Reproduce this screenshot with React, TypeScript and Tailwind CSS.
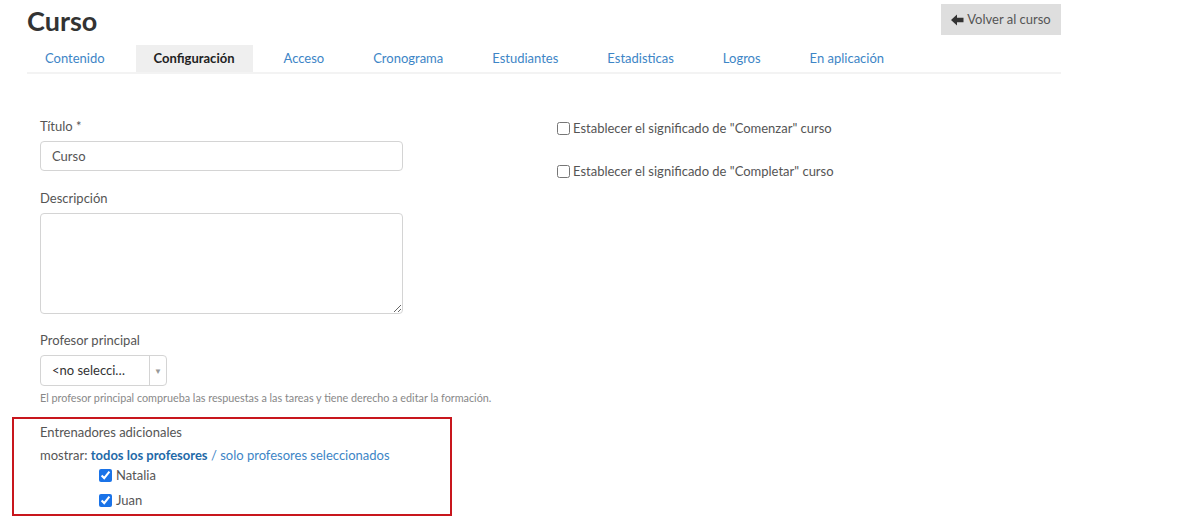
import React from 'react';

const tabs = ['Contenido', 'Configuración', 'Acceso', 'Cronograma', 'Estudiantes', 'Estadisticas', 'Logros', 'En aplicación'];

export default function App() {
    return (
        <div className="min-h-[523px] bg-white font-['Lato','Liberation_Sans',sans-serif] text-[13px] text-[#555]">
            <div className="ml-[27px] w-[1034px]">
                {/* Header */}
                <div className="flex items-start justify-between pt-[4px]">
                    <h1 className="mt-[1px] text-[27px] font-bold leading-[32px] text-[#333]">Curso</h1>
                    <button className="flex h-[31px] w-[120px] items-center justify-center gap-[3px] bg-[#dedede] text-[13px] text-[#555]">
                        <svg width="13" height="12" viewBox="0 0 13 12" className="mt-[1px]">
                            <path d="M0 6 L6 0.5 V3.8 H12.5 V8.2 H6 V11.5 Z" fill="#333" />
                        </svg>
                        Volver al curso
                    </button>
                </div>

                {/* Tabs */}
                <div className="mt-[8px] flex gap-[13px] border-b-2 border-[#f3f3f3]">
                    {tabs.map((tab) => (
                        <div
                            key={tab}
                            className={
                                tab === 'Configuración'
                                    ? 'flex h-[27px] items-center bg-[#efefef] px-[18px] font-bold text-[#222]'
                                    : 'flex h-[27px] items-center px-[18px] text-[#3d85c6]'
                            }
                        >
                            {tab}
                        </div>
                    ))}
                </div>

                {/* Form */}
                <div className="mt-[44px] grid grid-cols-2">
                    <div className="px-[13px]">
                        <label className="block leading-[16px]">Título *</label>
                        <input
                            defaultValue="Curso"
                            className="mt-[7px] h-[30px] w-[363px] rounded-[4px] border border-[#d4d4d4] px-[11px] text-[13px] text-[#555] outline-none"
                        />

                        <label className="mt-[19px] block leading-[16px]">Descripción</label>
                        <textarea className="mt-[7px] block h-[101px] w-[363px] rounded-[4px] border border-[#d4d4d4] outline-none" />

                        <label className="mt-[18px] block leading-[16px]">Profesor principal</label>
                        <div className="mt-[7px] flex h-[31px] w-[127px] items-center rounded-[4px] border border-[#d4d4d4]">
                            <span className="flex-1 pl-[11px] text-[13px] text-[#333]">&lt;no selecci…</span>
                            <span className="flex h-full w-[17px] items-center justify-center border-l border-[#d4d4d4] text-[8px] text-[#999]">▼</span>
                        </div>
                        <p className="mt-[5px] text-[10.8px] leading-[13px] text-[#888]">
                            El profesor principal comprueba las respuestas a las tareas y tiene derecho a editar la formación.
                        </p>

                        <div className="mt-[13px] ml-[-28px] w-[440px] border-2 border-[#c8161d] pl-[26px] pt-[5px] pb-[6px]">
                            <div className="leading-[16px]">Entrenadores adicionales</div>
                            <div className="mt-[7px] leading-[16px]">
                                mostrar: <span className="font-bold text-[#1f6aa8]">todos los profesores</span>{' '}
                                <span className="text-[#3d85c6]">/ solo profesores seleccionados</span>
                            </div>
                            <label className="ml-[59px] mt-[4px] flex items-center gap-[4px] leading-[16px]">
                                <input type="checkbox" defaultChecked className="m-0 h-[13px] w-[13px] accent-[#1a73e8]" />
                                Natalia
                            </label>
                            <label className="ml-[59px] mt-[9px] flex items-center gap-[4px] leading-[16px]">
                                <input type="checkbox" defaultChecked className="m-0 h-[13px] w-[13px] accent-[#1a73e8]" />
                                Juan
                            </label>
                        </div>
                    </div>

                    <div className="px-[13px] pt-[2px]">
                        <label className="flex items-center gap-[3px] leading-[16px]">
                            <input type="checkbox" className="m-0 h-[13px] w-[13px]" />
                            Establecer el significado de "Comenzar" curso
                        </label>
                        <label className="mt-[27px] flex items-center gap-[3px] leading-[16px]">
                            <input type="checkbox" className="m-0 h-[13px] w-[13px]" />
                            Establecer el significado de "Completar" curso
                        </label>
                    </div>
                </div>
            </div>
        </div>
    );
}
